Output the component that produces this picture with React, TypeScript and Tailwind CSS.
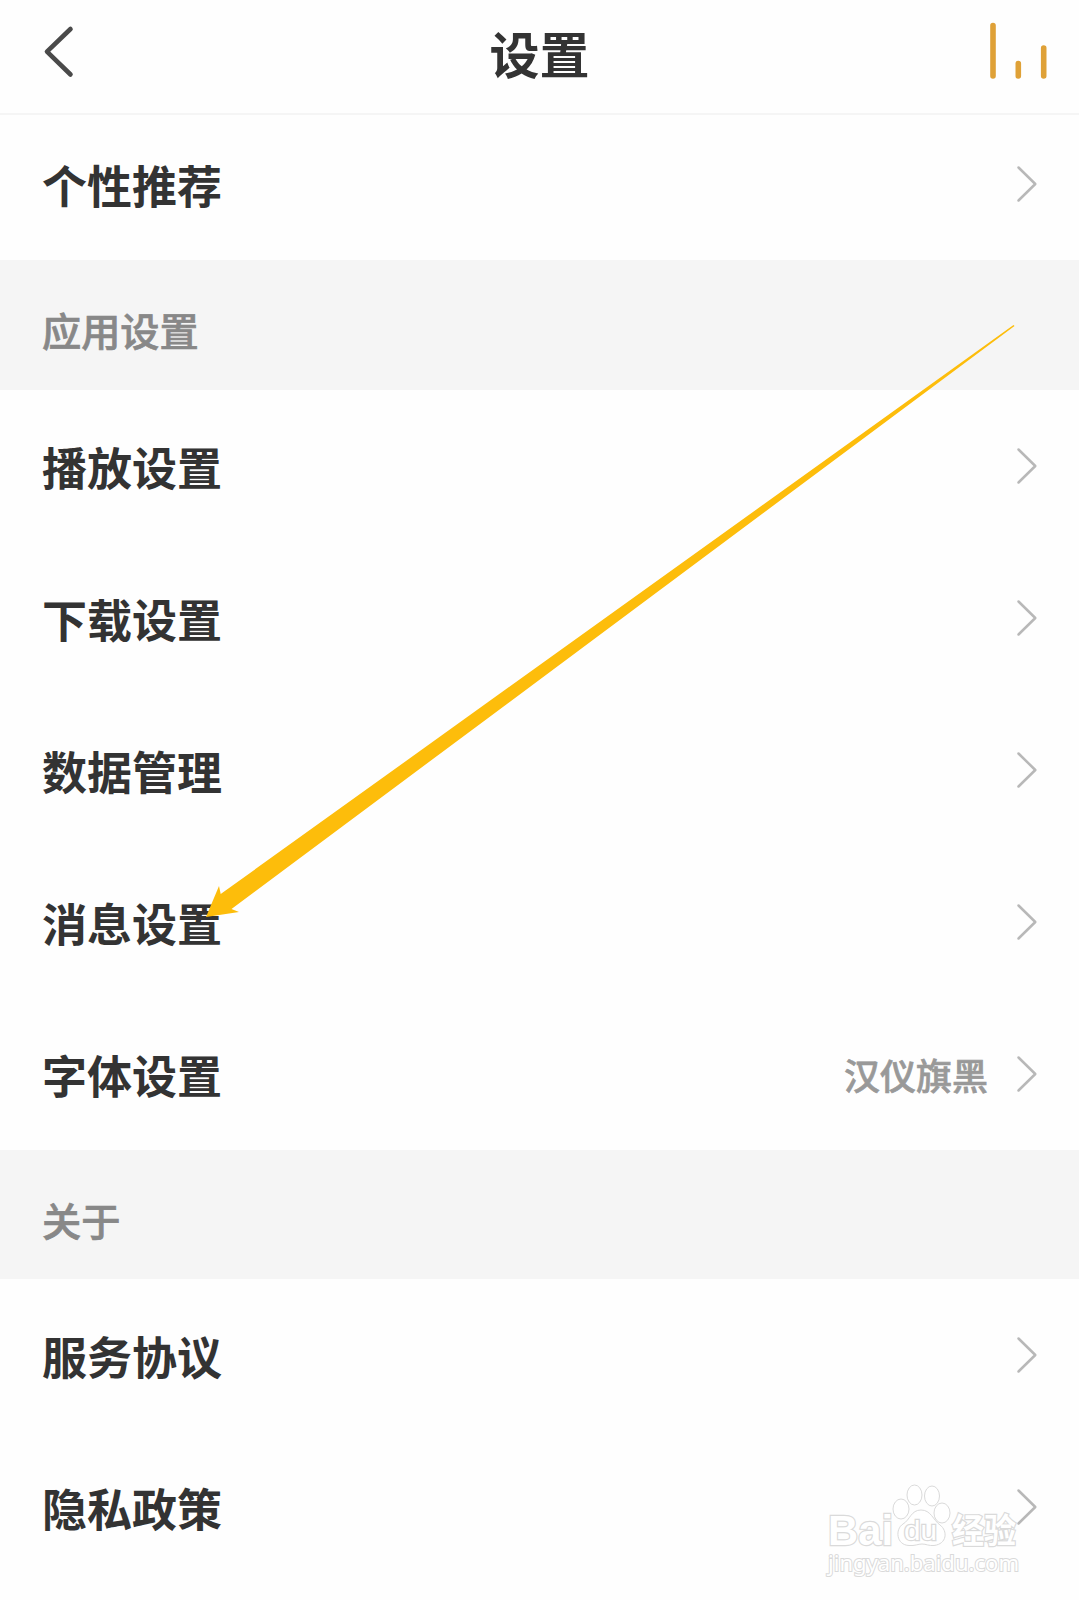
import React from "react";

type SettingItem = {
  label: string;
  value?: string;
};

const appSettings: SettingItem[] = [
  { label: "播放设置" },
  { label: "下载设置" },
  { label: "数据管理" },
  { label: "消息设置" },
  { label: "字体设置", value: "汉仪旗黑" },
];

const aboutItems: SettingItem[] = [
  { label: "服务协议" },
  { label: "隐私政策" },
];

const Chevron = () => (
  <svg className="h-[38px] w-[22px]" viewBox="0 0 22 38" fill="none" stroke="#b8b8b8" strokeWidth="2.5" strokeLinecap="round" strokeLinejoin="round">
    <path d="M2.5 2.5 L19.3 19 L2.5 35.5" />
  </svg>
);

const SettingRow = ({ label, value }: SettingItem) => (
  <div className="flex h-[152px] shrink-0 items-center justify-between pr-[41px] pl-[42px]">
    <span className="text-[45px] leading-none font-bold text-[#333333]">{label}</span>
    <div className="flex items-center gap-[28px]">
      {value && (
        <span className="text-[36px] leading-none font-medium text-[#999999] [-webkit-text-stroke:0.7px_#999999]">{value}</span>
      )}
      <Chevron />
    </div>
  </div>
);

const SectionTitle = ({ title, className }: { title: string; className: string }) => (
  <div className={`flex shrink-0 items-center bg-[#f5f5f5] pl-[42px] ${className}`}>
    <span className="pt-2.5 text-[39.2px] leading-none font-medium text-[#888888] [-webkit-text-stroke:0.7px_#888888]">{title}</span>
  </div>
);

const Header = () => (
  <header className="flex h-[115px] shrink-0 items-start justify-between border-b-2 border-[#f5f5f5] pr-[32px] pl-[43px]">
    <svg className="mt-[25px] h-[54px] w-[49px]" viewBox="0 0 49 54" fill="none" stroke="#4a4a4a" strokeWidth="4.6" strokeLinecap="round" strokeLinejoin="round">
      <path d="M27.5 4 L4 26.7 L27.5 49.5" />
    </svg>
    <h1 className="mt-[27px] text-[50px] leading-none font-bold text-[#333333]">设置</h1>
    <svg className="mt-[20px] h-[62px] w-[60px]" viewBox="0 0 60 62" stroke="#dfa137" strokeWidth="5.6" strokeLinecap="round">
      <path d="M6 5.500 V56 M31.300 43.500 V56 M56.700 28 V56" />
    </svg>
  </header>
);

const Pointer = () => (
  <svg className="pointer-events-none absolute top-0 left-0 h-[1600px] w-[1079px]" viewBox="0 0 1079 1600">
    <path d="M206 917 L219 886 L220.7 894 L1013.5 325 L1014.5 326 L231.5 909 L239 912 Z" fill="#fdbd0b" />
  </svg>
);

const Watermark = () => (
  <svg
    className="pointer-events-none absolute right-[49px] bottom-[18px] h-[104px] w-[210px] font-['Liberation_Sans','Noto_Sans_CJK_SC',sans-serif] [&_text]:[paint-order:stroke]"
    viewBox="0 0 210 104"
    fill="#ffffff"
    stroke="#dadada"
    strokeWidth="1"
  >
    <ellipse cx="81" cy="31" rx="8" ry="10" />
    <ellipse cx="94.5" cy="17" rx="7.500" ry="10" />
    <ellipse cx="112" cy="18" rx="7.500" ry="10" />
    <ellipse cx="122" cy="35" rx="8" ry="10" />
    <path d="M101 32 C91 32 90 42 83 46 C75 51 76 67 89 67.5 C95 68 98 66 102 66 C106 66 109 68 114 67.5 C127 66 128 53 120 47 C113 42 111 32 101 32 Z" />
    <text x="8" y="67" fontSize="43" fontWeight="700" strokeWidth="2.4" textLength="65" lengthAdjust="spacingAndGlyphs">Bai</text>
    <text x="84" y="62" fontSize="27" strokeWidth="2.4" textLength="33" lengthAdjust="spacingAndGlyphs">du</text>
    <text x="132" y="65" fontSize="34" fontWeight="700" strokeWidth="2.4" textLength="64" lengthAdjust="spacingAndGlyphs">经验</text>
    <text x="8" y="93" fontSize="22" strokeWidth="2" fontFamily="Noto Sans" textLength="191" lengthAdjust="spacingAndGlyphs">jingyan.baidu.com</text>
  </svg>
);

const App = () => {
  return (
    <div className="relative flex h-[1600px] w-[1079px] flex-col overflow-hidden bg-[#fefefe] font-['Noto_Sans_CJK_SC',sans-serif]">
      <Header />
      <div className="-mt-[7px]">
        <SettingRow label="个性推荐" />
      </div>
      <SectionTitle title="应用设置" className="h-[130px]" />
      {appSettings.map((item) => (
        <SettingRow key={item.label} {...item} />
      ))}
      <SectionTitle title="关于" className="h-[129px]" />
      {aboutItems.map((item) => (
        <SettingRow key={item.label} {...item} />
      ))}
      <Pointer />
      <Watermark />
    </div>
  );
};

export default App;
